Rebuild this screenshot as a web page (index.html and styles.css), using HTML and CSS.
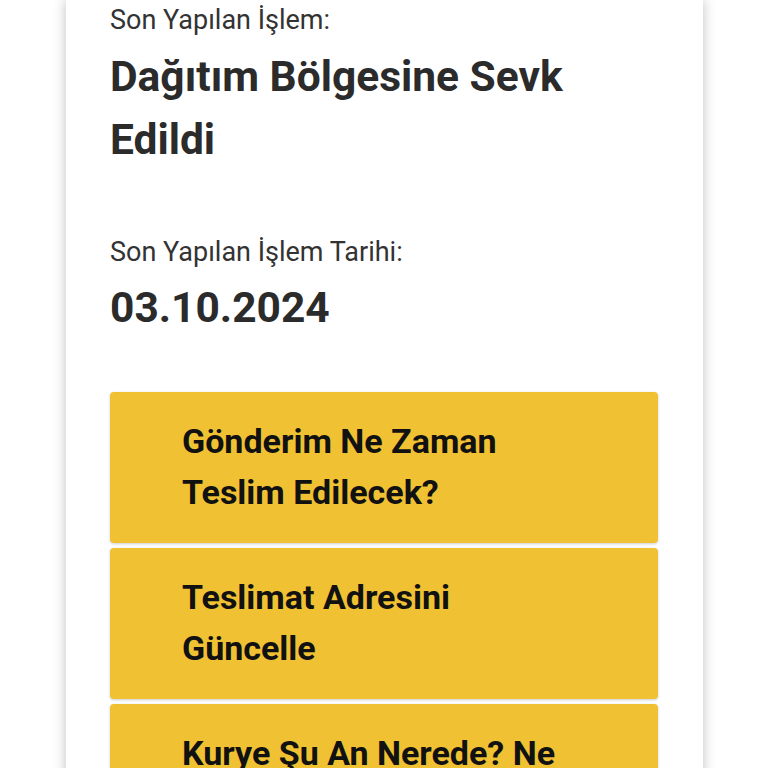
FILE: index.html
```html
<!DOCTYPE html>
<html lang="tr">

<head>
    <meta charset="UTF-8">
    <meta name="viewport" content="width=device-width, initial-scale=1.0">
    <title>Gönderi Takip</title>
    <link rel="stylesheet" href="styles.css">
</head>

<body>
    <div id="container">
        <div class="status-block">
            <p class="label">Son Yapılan İşlem:</p>
            <h2 class="value">Dağıtım Bölgesine Sevk Edildi</h2>
        </div>

        <div class="status-block date-block">
            <p class="label">Son Yapılan İşlem Tarihi:</p>
            <h2 class="value">03.10.2024</h2>
        </div>

        <div class="action-list">
            <button class="action-button">Gönderim Ne Zaman Teslim Edilecek?</button>
            <button class="action-button">Teslimat Adresini Güncelle</button>
            <button class="action-button">Kurye Şu An Nerede? Ne Zaman Gelecek?</button>
        </div>
    </div>
</body>

</html>
```

FILE: styles.css
```css
body {
    margin: 0;
    font-family: Roboto, "Liberation Sans", Arial, sans-serif;
    background-color: #fff;
}

#container {
    width: 548px;
    margin: 0 0 0 66px;
    padding: 2px 45px 40px 44px;
    background-color: #fff;
    box-shadow: 0px 0px 12px rgba(0, 0, 0, 0.25);
}

.label {
    margin: 0;
    font-size: 27px;
    line-height: 36px;
    color: #333;
}

.value {
    margin: 7px 0 0 0;
    font-size: 42.5px;
    line-height: 63px;
    font-weight: 700;
    color: #2b2b2b;
}

.date-block {
    margin-top: 63px;
}

.date-block .value {
    margin-top: 6px;
}

.action-list {
    display: flex;
    flex-direction: column;
    gap: 5px;
    margin-top: 53px;
}

.action-button {
    display: block;
    width: 100%;
    padding: 24px 85px 25px 72px;
    text-align: left;
    font-family: Roboto, "Liberation Sans", Arial, sans-serif;
    font-size: 34px;
    line-height: 51px;
    font-weight: 700;
    color: #111;
    background-color: #f0c132;
    border: none;
    border-radius: 4px;
    box-shadow: 0px 1px 3px rgba(0, 0, 0, 0.2);
    cursor: pointer;
}
```
